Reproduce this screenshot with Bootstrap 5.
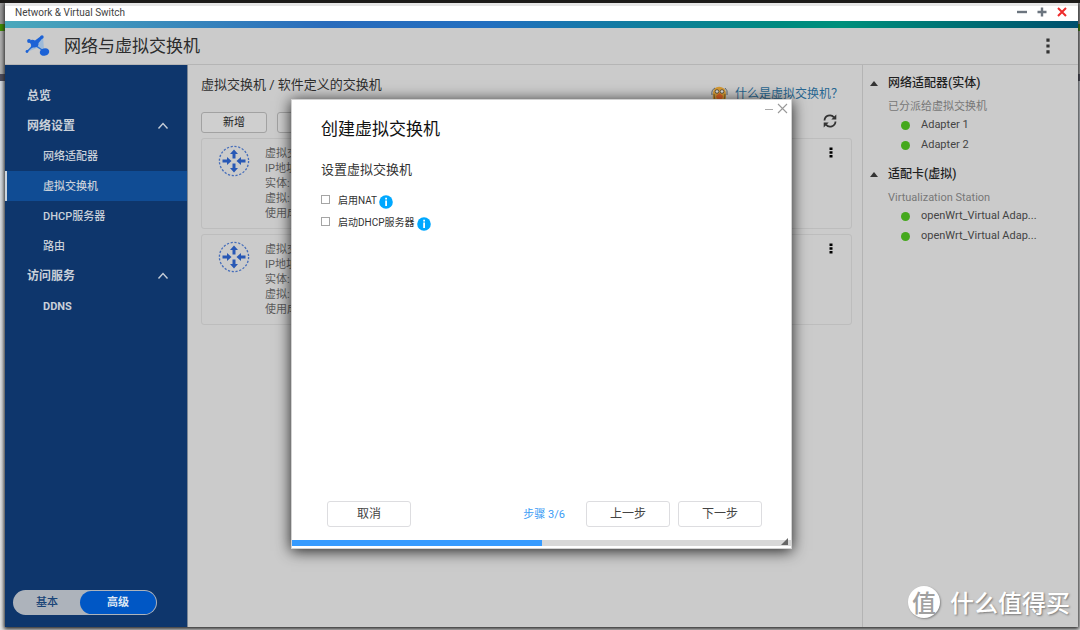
<!DOCTYPE html>
<html lang="zh-CN">
<head>
<meta charset="utf-8">
<meta name="viewport" content="width=device-width, initial-scale=1">
<title>Network &amp; Virtual Switch</title>
<link rel="stylesheet" href="https://cdn.jsdelivr.net/npm/bootstrap@5.3.0/dist/css/bootstrap.min.css">
<script defer src="https://cdn.jsdelivr.net/npm/bootstrap@5.3.0/dist/js/bootstrap.bundle.min.js"></script>
<style>
  body { font-family: Roboto, "Noto Sans CJK SC", sans-serif; font-size: 11px; line-height: 15px; color: #333;
    background: linear-gradient(#1b1a18 3px, #999 3px, #999 24px, #3f8f00 24px, #3f8f00 31px, #b0b0b0 31px, #b0b0b0 74px, #4c4c5c 74px, #4c4c5c 81px, #d5dbe2 81px, #e4e4e4 100%); }
  .desktop { padding: 3px 2px 3px 5px; }
  .app-window { background: #cbcbcb; box-shadow: 0 1px 4px 1px #222; }
  .title-bar { height: 18px; background: linear-gradient(#e6e6e6 3px, #fff 3px); padding: 0 10px; font-size: 10px; color: #444; }
  .stripe { height: 7px; background: linear-gradient(90deg, #4aa8bb, #2a6cbc 30%, #236fc0 45%, #008a80 72%, #00907c 78%, #00506e); }
  .app-head { height: 37px; padding: 0 24px 0 20px; gap: 13px; border-bottom: 1px solid #b5b5b5; }
  .app-head h1 { font-size: 17px; line-height: 24px; color: #2c2c2c; }
  .icon-btn { border: 0; background: none; padding: 0; line-height: 0; display: block; }
  .side { width: 183px; background: #0e366c; padding: 16px 0 12px; border-right: 1px solid #7b8795; }
  .side a { height: 30px; padding: 0 18px 0 22px; font-size: 12px; font-weight: 700; color: #c9d0d9; text-decoration: none; }
  .side a.sub { padding-left: 38px; font-size: 11px; font-weight: 500; }
  .side a.latin { font-weight: 700; }
  .side a.current { background: #104c94; border-left: 2px solid #ccd4de; padding-left: 36px; }
  .mode { width: 144px; height: 25px; margin-left: 8px; padding: 1px; border-radius: 13px; background: #adb3bb; }
  .mode button { border: 0; background: none; padding: 0; width: 66px; color: #194477; font-weight: 500; font-size: 11px; }
  .mode button.on { width: 76px; border-radius: 12px; background: #0057c5; color: #dce6f3; font-weight: 700; }
  .main-pane { padding: 0 10px 0 13px; }
  .crumbs { height: 47px; padding-right: 9px; }
  .crumbs h2 { font-size: 13px; line-height: 20px; margin: 10px 0 0; color: #2e2e2e; font-weight: 400; }
  .help { margin-top: 19px; gap: 7px; font-size: 12px; line-height: 20px; color: #286791; text-decoration: none; }
  .tool-row { height: 21px; gap: 10px; padding-right: 15px; }
  .tool-btn { width: 66px; height: 21px; padding: 0; border: 1px solid #a2a2a2; border-radius: 3px; background: #cfcfcf; font-size: 11px; line-height: 20px; color: #1d1d1d; }
  .switch-card { height: 91px; border: 1px solid #bdbdbd; border-radius: 3px; padding: 6px 18px 0 16px; margin-top: 5px; color: #5c5c5c; }
  .switch-card ul { margin-left: 15px; padding-top: 1px; }
  .aside-pane { width: 216px; border-left: 1px solid #b4b4b4; padding: 8px 8px 0 7px; }
  .aside-pane h3 { font-size: 12px; line-height: 20px; font-weight: 500; color: #1f1f1f; margin: 0; gap: 10px; }
  .aside-pane p { margin: 6px 0 0 18px; line-height: 16px; color: #777; }
  .aside-pane ul { margin: 0 0 9px 31px; }
  .aside-pane li { height: 18px; gap: 11px; color: #444; }
  .aside-pane li + li { height: 22px; }
  .dot { width: 9px; height: 9px; border-radius: 50%; background: #45a81d; margin-top: 2px; }
  .wizard-layer { padding-top: 18px; }
  .wizard { width: 501px; height: 450px; background: #fff; border: 1px solid #d2d2d2; box-shadow: 0 2px 14px rgba(0,0,0,.85); color: #333; }
  .wiz-tools { height: 17px; gap: 3px; padding: 0 3px; }
  .wizard h2 { font-size: 17px; line-height: 24px; color: #111; font-weight: 400; margin: 0; }
  .wiz-body { padding: 0 29px; }
  .wiz-body h3 { font-size: 13px; line-height: 20px; font-weight: 400; color: #333; margin: 19px 0 9px; }
  .opt { height: 22px; font-size: 10px; }
  .opt input { appearance: none; width: 9px; height: 9px; border: 1px solid #a5a5a5; margin: 0 8px 2px 0; background: #fff; }
  .opt svg { margin: 3px 0 0 2px; }
  .wiz-foot { padding: 0 29px 0 35px; margin-bottom: 13px; }
  .wiz-foot button { width: 84px; height: 26px; padding: 0; font-size: 12px; line-height: 20px; color: #444; background: #fff; border: 1px solid #dddde0; border-radius: 3px; }
  .step { color: #3b9cf5; margin-right: 21px; }
  .track { height: 6px; background: #d8d8d8; margin-bottom: 2px; }
  .track div { background: #369bff; height: 6px; }
  .grip { right: 3px; bottom: 3px; }
  .brand { right: 8px; bottom: 7px; gap: 10px; color: #fff; font-size: 24px; line-height: 36px; font-weight: 500; font-family: "Noto Sans CJK SC", sans-serif; text-shadow: 1px 1px 2px #777; }
  .brand-mark { width: 32px; height: 32px; border-radius: 50%; background: #fff; color: #a0a0a0; text-shadow: none; box-shadow: 1px 1px 2px #888; }
</style>
</head>
<body>
<svg class="d-none" aria-hidden="true">
  <symbol id="hub" viewBox="0 0 32 32">
    <circle cx="16" cy="16" r="14.6" fill="none" stroke="#456dba" stroke-width="1.3" stroke-dasharray="2.2 1.620"/>
    <g fill="#2858b5">
      <path d="M16 4.500l4 4.500h-2.500v4.500h-3V9H12z"/>
      <path d="M16 27.500l4-4.500h-2.500v-4.500h-3V23H12z"/>
      <path d="M13.500 16l-4.500-4v2.500H4.500v3H9V20z"/>
      <path d="M18.500 16l4.500-4v2.500h4.500v3H23V20z"/>
    </g>
  </symbol>
  <symbol id="more" viewBox="0 0 4 16"><path d="M.4.500h3.200v3.200H.4zM.4 6.400h3.200v3.200H.4zM.4 12.300h3.200v3.200H.4z"/></symbol>
  <symbol id="more-sm" viewBox="0 0 4 11"><path d="M.5.500h3v2.500h-3zM.5 4.250h3v2.500h-3zM.5 8h3v2.500h-3z"/></symbol>
  <symbol id="info" viewBox="0 0 14 14"><circle cx="7" cy="7" r="6.800" fill="#00a8ff"/><path d="M6.200 2.800h1.800v1.800H6.200zM6.200 5.600h1.800v5.400H6.200z" fill="#fff"/></symbol>
  <symbol id="up" viewBox="0 0 12 8"><path d="M1.500 6.500l4.500-5 4.500 5" fill="none" stroke="#c4ccd6" stroke-width="1.400"/></symbol>
</svg>

<div class="desktop vh-100 d-flex">
  <div class="app-window flex-grow-1 d-flex flex-column position-relative">
    <header class="title-bar d-flex align-items-center justify-content-between flex-shrink-0">
      <span>Network &amp; Virtual Switch</span>
      <span class="d-flex gap-2">
        <button class="icon-btn" aria-label="最小化"><svg width="12" height="12"><path d="M1 6h10" stroke="#6c757f" stroke-width="2.400"/></svg></button>
        <button class="icon-btn" aria-label="最大化"><svg width="12" height="12"><path d="M1.500 6h9M6 1.500v9" stroke="#6c757f" stroke-width="2.400"/></svg></button>
        <button class="icon-btn" aria-label="关闭"><svg width="12" height="12"><path d="M2 2l8 8M10 2l-8 8" stroke="#ee2b2b" stroke-width="2"/></svg></button>
      </span>
    </header>
    <div class="stripe flex-shrink-0"></div>
    <div class="app-head d-flex align-items-center flex-shrink-0">
      <svg width="26" height="22" viewBox="0 0 26 22">
        <path d="M2 17L8 7l10-5 1 13-7-2z" fill="#8fb4dc" opacity=".75"/>
        <path d="M1.500 17L17.500 2M4 6l16 11" stroke="#2b70d3" stroke-width="1.500"/>
        <path d="M4.500 6Q7 4 10 5.500L16 1l2 1.500L13.500 8q.5 4-4 4.500Q7 12 5.500 13.500 7 10 5 8z" fill="#1c62d6"/>
        <circle cx="4" cy="6" r="1.900" fill="#1c62d6"/><circle cx="17" cy="2" r="1.700" fill="#1c62d6"/><circle cx="2" cy="16.500" r="1.400" fill="#1c62d6"/>
        <ellipse cx="19.500" cy="17" rx="4.800" ry="3.700" fill="#1c62d6" transform="rotate(-15 19.500 17)"/>
      </svg>
      <h1 class="mb-0 fw-normal flex-grow-1">网络与虚拟交换机</h1>
      <button class="icon-btn me-1" aria-label="更多"><svg width="4" height="16" fill="#333"><use href="#more"/></svg></button>
    </div>

    <div class="flex-grow-1 d-flex">
      <nav class="side d-flex flex-column flex-shrink-0">
        <a href="#" class="d-flex align-items-center">总览</a>
        <a href="#" class="d-flex align-items-center justify-content-between">网络设置<svg width="12" height="8"><use href="#up"/></svg></a>
        <a href="#" class="sub d-flex align-items-center">网络适配器</a>
        <a href="#" class="sub current d-flex align-items-center">虚拟交换机</a>
        <a href="#" class="sub d-flex align-items-center">DHCP服务器</a>
        <a href="#" class="sub d-flex align-items-center">路由</a>
        <a href="#" class="d-flex align-items-center justify-content-between">访问服务<svg width="12" height="8"><use href="#up"/></svg></a>
        <a href="#" class="sub latin d-flex align-items-center">DDNS</a>
        <div class="mode d-flex mt-auto"><button>基本</button><button class="on">高级</button></div>
      </nav>

      <main class="main-pane flex-grow-1">
        <div class="crumbs d-flex justify-content-between align-items-start">
          <h2>虚拟交换机 / 软件定义的交换机</h2>
          <a href="#" class="help d-flex align-items-center">
            <svg width="17" height="16" viewBox="0 0 17 16"><path d="M2 14Q1 3 5 1.500q4-2 8 1Q16 5 14.500 15H3z" fill="#d69b35"/><path d="M1 9q-1-5 3-7M16 9q1-5-2-7" stroke="#5f6970" stroke-width="1" fill="none"/><circle cx="6" cy="5.500" r="1.800" fill="#ddd" stroke="#4c4436" stroke-width=".8"/><circle cx="11" cy="5.500" r="1.800" fill="#ddd" stroke="#4c4436" stroke-width=".8"/><path d="M5 10l3.500-3L12 10l-1 3H6z" fill="#df6327"/><path d="M3 8q0 5 2 7M14 8q0 5-2 7" stroke="#675433" stroke-width=".8" fill="none"/></svg>
            什么是虚拟交换机？</a>
        </div>
        <div class="tool-row d-flex align-items-start">
          <button class="tool-btn">新增</button>
          <button class="tool-btn">管理</button>
          <button class="icon-btn ms-auto" aria-label="刷新"><svg width="14" height="18" viewBox="0 -2 14 18"><path d="M1.500 6.500A5.400 5.400 0 0 1 11 3.300M12.500 7.500A5.400 5.400 0 0 1 3 10.700" fill="none" stroke="#333" stroke-width="1.800"/><path d="M13.300.500v5H8.300zM.700 13.500v-5h5z" fill="#333"/></svg></button>
        </div>
        <section class="switch-card d-flex align-items-start">
          <svg width="32" height="32"><use href="#hub"/></svg>
          <ul class="list-unstyled mb-0 flex-grow-1"><li>虚拟交换机 1</li><li>IP地址:</li><li>实体:</li><li>虚拟:</li><li>使用成员:</li></ul>
          <button class="icon-btn" aria-label="更多"><svg width="4" height="15" viewBox="0 -2 4 15"><use href="#more-sm" width="4" height="11"/></svg></button>
        </section>
        <section class="switch-card d-flex align-items-start">
          <svg width="32" height="32"><use href="#hub"/></svg>
          <ul class="list-unstyled mb-0 flex-grow-1"><li>虚拟交换机 2</li><li>IP地址:</li><li>实体:</li><li>虚拟:</li><li>使用成员:</li></ul>
          <button class="icon-btn" aria-label="更多"><svg width="4" height="15" viewBox="0 -2 4 15"><use href="#more-sm" width="4" height="11"/></svg></button>
        </section>
      </main>

      <aside class="aside-pane flex-shrink-0">
        <h3 class="d-flex align-items-center"><svg width="8" height="5"><path d="M0 5l4-5 4 5z" fill="#333"/></svg>网络适配器(实体)</h3>
        <p>已分派给虚拟交换机</p>
        <ul class="list-unstyled">
          <li class="d-flex align-items-center"><span class="dot"></span>Adapter 1</li>
          <li class="d-flex align-items-center"><span class="dot"></span>Adapter 2</li>
        </ul>
        <h3 class="d-flex align-items-center"><svg width="8" height="5"><path d="M0 5l4-5 4 5z" fill="#333"/></svg>适配卡(虚拟)</h3>
        <p>Virtualization Station</p>
        <ul class="list-unstyled">
          <li class="d-flex align-items-center"><span class="dot"></span>openWrt_Virtual Adap...</li>
          <li class="d-flex align-items-center"><span class="dot"></span>openWrt_Virtual Adap...</li>
        </ul>
      </aside>
    </div>

    <div class="wizard-layer position-absolute top-0 start-0 w-100 h-100 d-flex align-items-center justify-content-center">
      <div class="wizard d-flex flex-column position-relative" role="dialog" aria-labelledby="wiz-title">
        <div class="wiz-tools d-flex justify-content-end align-items-center">
          <button class="icon-btn" aria-label="最小化"><svg width="10" height="10"><path d="M1 5.500h8" stroke="#aaa"/></svg></button>
          <button class="icon-btn" aria-label="关闭"><svg width="11" height="11"><path d="M1 1l9 9M10 1l-9 9" stroke="#999" stroke-width="1.100"/></svg></button>
        </div>
        <div class="wiz-body flex-grow-1">
          <h2 id="wiz-title">创建虚拟交换机</h2>
          <h3>设置虚拟交换机</h3>
          <div class="opt d-flex align-items-center"><input type="checkbox" id="nat"><label for="nat">启用NAT</label><svg width="14" height="14"><use href="#info"/></svg></div>
          <div class="opt d-flex align-items-center"><input type="checkbox" id="dhcp"><label for="dhcp">启动DHCP服务器</label><svg width="14" height="14"><use href="#info"/></svg></div>
        </div>
        <div class="wiz-foot d-flex align-items-center">
          <button class="me-auto">取消</button>
          <span class="step">步骤 3/6</span>
          <button class="me-2">上一步</button>
          <button>下一步</button>
        </div>
        <div class="track"><div class="w-50"></div></div>
        <svg class="grip position-absolute" width="7" height="7"><path d="M7 0v7H0z" fill="#666"/></svg>
      </div>
    </div>

    <div class="brand position-absolute d-flex align-items-center">
      <span class="brand-mark d-flex align-items-center justify-content-center">值</span>什么值得买
    </div>
  </div>
</div>
</body>
</html>
